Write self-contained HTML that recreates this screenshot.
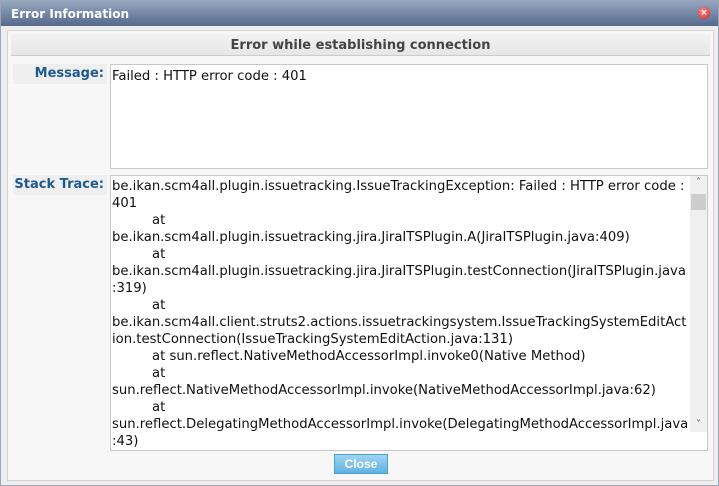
<!DOCTYPE html>
<html><head><meta charset="utf-8"><style>
*{box-sizing:border-box;margin:0;padding:0}
body{width:719px;height:486px;background:#fff;font-family:"DejaVu Sans","Liberation Sans",sans-serif;font-size:12px;overflow:hidden;position:relative}
.win{position:absolute;left:0;top:0;width:719px;height:486px;border:1px solid #9aa5b5;background:#eeeeee}
.title{position:absolute;left:0;top:0;width:717px;height:25px;background:linear-gradient(#95a6c0,#56698c);color:#fff;font-weight:bold;font-size:12px;line-height:26px;padding-left:10px}
.close{position:absolute;right:8px;top:6px;width:12px;height:12px;border-radius:50%;background:radial-gradient(circle at 40% 35%,#f88,#d22);color:#fff;font-size:9px;line-height:12px;text-align:center;font-weight:bold}
.panel{position:absolute;left:6px;top:29px;width:707px;height:451px;background:#f7f7f7;border:1px solid #d4d4d4}
.hdr{position:absolute;left:3px;top:3px;width:699px;height:22px;background:linear-gradient(#f2f2f2,#e6e6e6);border-bottom:1px solid #ccc;text-align:center;font-weight:bold;color:#444;font-size:13px;line-height:23px}
.lbl{position:absolute;left:5px;width:94px;height:20px;background:#efefef;color:#1e5a8e;font-weight:bold;font-size:13px;text-align:right;padding-right:3px;line-height:20px}
.ta{position:absolute;background:#fff;border:1px solid #c8c8c8;color:#111;font-size:13.2px}
.pre{white-space:pre;line-height:17px;position:absolute;left:1px;top:2px;tab-size:40px}
.sb{position:absolute;right:0;top:0;width:17px;height:256px;background:#f0f0f0}
.btn{position:absolute;left:326px;top:423px;width:54px;height:20px;background:linear-gradient(#9fd4f2,#5fb2e2);border:1px solid #4aa0d0;color:#fff;font-weight:bold;font-size:12px;text-align:center;line-height:18px}
</style></head><body>
<div class="win">
<div class="title">Error Information</div>
<div class="close">×</div>
<div class="panel">
<div class="hdr">Error while establishing connection</div>
<div class="lbl" style="top:33px">Message:</div>
<div class="ta" style="left:102px;top:33px;width:598px;height:105px"><div class="pre" style="top:3px">Failed : HTTP error code : 401</div></div>
<div class="lbl" style="top:144px">Stack Trace:</div>
<div class="ta" style="left:102px;top:144px;width:598px;height:276px;overflow:hidden"><div class="pre">be.ikan.scm4all.plugin.issuetracking.IssueTrackingException: Failed : HTTP error code :
401
	at
be.ikan.scm4all.plugin.issuetracking.jira.JiraITSPlugin.A(JiraITSPlugin.java:409)
	at
be.ikan.scm4all.plugin.issuetracking.jira.JiraITSPlugin.testConnection(JiraITSPlugin.java
:319)
	at
be.ikan.scm4all.client.struts2.actions.issuetrackingsystem.IssueTrackingSystemEditAct
ion.testConnection(IssueTrackingSystemEditAction.java:131)
	at sun.reflect.NativeMethodAccessorImpl.invoke0(Native Method)
	at
sun.reflect.NativeMethodAccessorImpl.invoke(NativeMethodAccessorImpl.java:62)
	at
sun.reflect.DelegatingMethodAccessorImpl.invoke(DelegatingMethodAccessorImpl.java
:43)</div>
<div class="sb"><div style="position:absolute;left:1px;top:18px;width:15px;height:16px;background:#cdcdcd"></div><div style="text-align:center;font-size:10px;color:#555;margin-top:1px">˄</div><div style="position:absolute;bottom:2px;width:17px;text-align:center;font-size:10px;color:#555">˅</div></div>
</div>
<button class="btn">Close</button>
</div>
</div>
</body></html>
